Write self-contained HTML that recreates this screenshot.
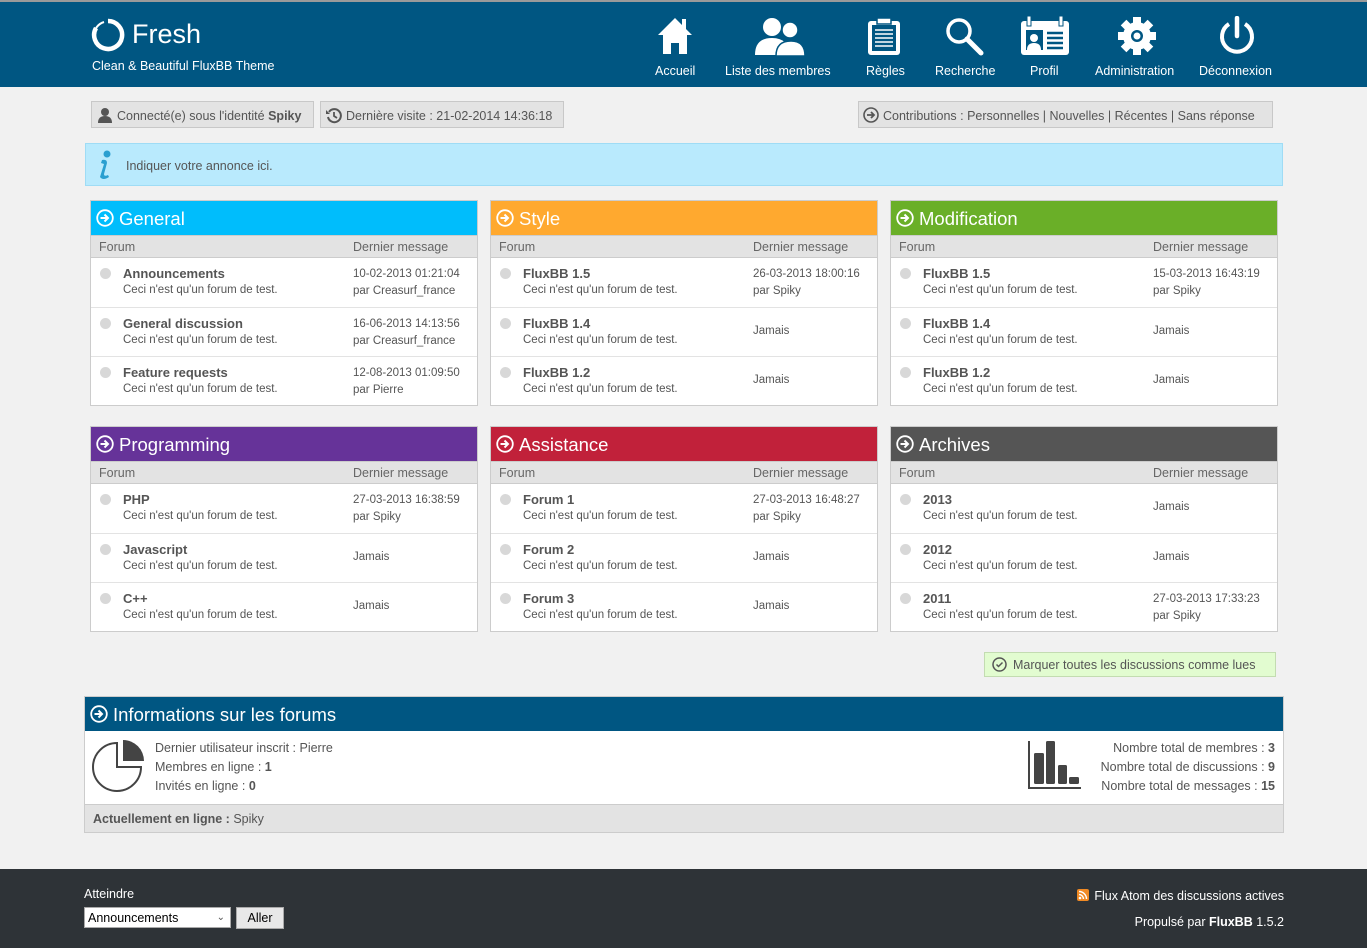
<!DOCTYPE html>
<html><head><meta charset="utf-8"><style>
*{margin:0;padding:0;box-sizing:border-box}
body{width:1367px;height:948px;background:#f1f1f1;font-family:"Liberation Sans","DejaVu Sans",sans-serif;color:#555;font-size:12px;position:relative;overflow:hidden}
.abs{position:absolute}
#hdr{left:0;top:0;width:1367px;height:87px;background:#005682;border-top:2px solid #9a9a9a}
.nav{position:absolute;top:62px;color:#fff;font-size:12.5px;white-space:nowrap}
.ic{position:absolute;top:14px}
.btn{position:absolute;top:101px;height:27px;background:#e3e3e3;border:1px solid #c8c8c8;font-size:12.5px;line-height:29px;padding:0 6px;color:#555;white-space:nowrap}
.panel{position:absolute;width:388px;height:206px;border:1px solid #ccc;background:#fff}
.ph{height:34px;color:#fff;font-size:18.5px;line-height:35px;padding-left:28px;position:relative}
.ph svg{position:absolute;left:5px;top:8px}
.sub{height:23px;background:#e3e3e3;border-top:1px solid #ccc;border-bottom:1px solid #ccc;font-size:12.5px;line-height:22px;color:#666;position:relative;padding-left:8px}
.sub span{position:absolute;left:262px}
.row{height:49.5px;border-bottom:1px solid #e3e3e3;position:relative}
.row:last-child{border-bottom:none}
.dot{position:absolute;left:9px;top:10px;width:11px;height:11px;border-radius:50%;background:#d8d8d8}
.t{position:absolute;left:32px;top:8px;font-weight:bold;font-size:13px;color:#555}
.d{position:absolute;left:32px;top:26px;font-size:11.5px;color:#555}
.m{position:absolute;left:262px;top:8px;font-size:11.5px;line-height:17px;color:#555}
.j{position:absolute;left:262px;top:17px;font-size:11.5px}
</style></head><body>
<div id="hdr" class="abs">
<svg class="abs" style="left:91px;top:16px" width="34" height="34" viewBox="0 0 34 34"><path d="M17 3 A14 14 0 1 1 5 10" fill="none" stroke="#fff" stroke-width="4.5"/><path d="M13 4 A14 14 0 0 0 3 17" fill="none" stroke="#fff" stroke-width="2"/></svg>
<div class="abs" style="left:132px;top:17px;color:#fff;font-size:27px">Fresh</div>
<div class="abs" style="left:92px;top:57px;color:#fff;font-size:12.5px">Clean &amp; Beautiful FluxBB Theme</div>
<svg class="ic" style="left:656px" width="38" height="40" viewBox="0 0 38 40"><path d="M19 2 L2 19 L7 19 L7 38 L15 38 L15 27 L23 27 L23 38 L31 38 L31 19 L36 19 L30 13 L30 3 L26 3 L26 9 Z" fill="#fff"/></svg>
<div class="nav" style="left:655px">Accueil</div>
<svg class="ic" style="left:754px" width="54" height="40" viewBox="0 0 54 40"><circle cx="18" cy="11" r="9" fill="#fff"/><path d="M1 39 Q1 22 18 22 Q35 22 35 39Z" fill="#fff"/><circle cx="36" cy="14" r="8" fill="#fff" stroke="#005682" stroke-width="1.5"/><path d="M22 40 Q22 25 37 25 Q51 25 51 40Z" fill="#fff" stroke="#005682" stroke-width="1.5"/></svg>
<div class="nav" style="left:725px">Liste des membres</div>
<svg class="ic" style="left:866px" width="36" height="40" viewBox="0 0 36 40"><rect x="2" y="5" width="32" height="34" rx="3" fill="#fff"/><rect x="6" y="9" width="24" height="26" fill="#005682"/><rect x="11" y="2" width="14" height="6" fill="#fff" stroke="#005682" stroke-width="1.5"/><g stroke="#fff" stroke-width="1.6"><path d="M9 14h18M9 18h18M9 22h18M9 26h18M9 30h18"/></g></svg>
<div class="nav" style="left:866px">Règles</div>
<svg class="ic" style="left:944px" width="40" height="40" viewBox="0 0 40 40"><circle cx="15" cy="15" r="11" fill="none" stroke="#fff" stroke-width="3.5"/><path d="M23 23 L37 37" stroke="#fff" stroke-width="5" stroke-linecap="round"/></svg>
<div class="nav" style="left:935px">Recherche</div>
<svg class="ic" style="left:1021px" width="48" height="40" viewBox="0 0 48 40"><rect x="0" y="5" width="48" height="34" rx="3" fill="#fff"/><rect x="6" y="0" width="4" height="10" fill="#fff" stroke="#005682"/><rect x="38" y="0" width="4" height="10" fill="#fff" stroke="#005682"/><rect x="5" y="14" width="17" height="20" fill="#005682"/><circle cx="13" cy="22" r="4" fill="#fff"/><path d="M6 34 Q6 27 13 27 Q20 27 20 34Z" fill="#fff"/><g stroke="#005682" stroke-width="2.5"><path d="M26 17h16M26 22h16M26 27h16M26 32h16"/></g></svg>
<div class="nav" style="left:1030px">Profil</div>
<svg class="ic" style="left:1116px" width="42" height="40" viewBox="0 0 42 40"><g transform="translate(21,20)"><g fill="#fff"><circle r="14"/><rect x="-4" y="-19" width="8" height="38"/><rect x="-4" y="-19" width="8" height="38" transform="rotate(45)"/><rect x="-4" y="-19" width="8" height="38" transform="rotate(90)"/><rect x="-4" y="-19" width="8" height="38" transform="rotate(135)"/></g><circle r="6" fill="#005682"/><circle r="3.5" fill="#fff"/></g></svg>
<div class="nav" style="left:1095px">Administration</div>
<svg class="ic" style="left:1217px" width="40" height="40" viewBox="0 0 40 40"><path d="M12 8 A15 15 0 1 0 28 8" fill="none" stroke="#fff" stroke-width="4"/><path d="M20 2 V20" stroke="#fff" stroke-width="4.5" stroke-linecap="round"/></svg>
<div class="nav" style="left:1199px">Déconnexion</div>
</div>

<div class="btn" style="left:91px;width:223px;padding-left:25px"><svg class="abs" style="left:5px;top:5px" width="16" height="16" viewBox="0 0 16 16"><circle cx="8" cy="5" r="4" fill="#555"/><path d="M1 16 Q1 9 8 9 Q15 9 15 16Z" fill="#555"/></svg>Connecté(e) sous l'identité <b>Spiky</b></div>
<div class="btn" style="left:320px;width:244px;padding-left:25px"><svg class="abs" style="left:4px;top:5px" width="17" height="17" viewBox="0 0 17 17"><path d="M4 5 A6.5 6.5 0 1 1 3 10" fill="none" stroke="#555" stroke-width="2"/><path d="M1 3 L5 7 L1 7Z" fill="#555"/><path d="M9 5 V9 L12 11" fill="none" stroke="#555" stroke-width="1.8"/></svg>Dernière visite : 21-02-2014 14:36:18</div>
<div class="btn" style="left:858px;width:415px;padding-left:24px"><svg class="abs" style="left:4px;top:5px" width="16" height="16" viewBox="0 0 16 16"><circle cx="8" cy="8" r="7" fill="none" stroke="#555" stroke-width="1.6"/><path d="M4 8h7M8 5l3 3-3 3" fill="none" stroke="#555" stroke-width="1.8"/></svg>Contributions : Personnelles | Nouvelles | Récentes | Sans réponse</div>

<div class="abs" style="left:85px;top:143px;width:1198px;height:43px;background:#b9eafd;border:1px solid #9fdcf5;font-size:12.5px;line-height:44px;padding-left:40px">
<svg class="abs" style="left:9px;top:6px" width="20" height="30" viewBox="0 0 20 30"><circle cx="12" cy="4" r="3.5" fill="#2a9fd0"/><path d="M7 10 Q12 9 12 13 L9 24 Q9 27 13 25 L14 27 Q8 31 5 27 L9 14 L6 13Z" fill="#2a9fd0"/></svg>
Indiquer votre annonce ici.</div>

<div class="panel" style="left:90px;top:200px"><div class="ph" style="background:#00bdfc"><svg width="18" height="18" viewBox="0 0 18 18"><circle cx="9" cy="9" r="7.8" fill="none" stroke="#fff" stroke-width="1.8"/><path d="M4.5 9h7M8.5 5.5 12 9l-3.5 3.5" fill="none" stroke="#fff" stroke-width="2"/></svg>General</div><div class="sub">Forum<span>Dernier message</span></div>
<div class="row"><div class="dot"></div><div class="t">Announcements</div><div class="d">Ceci n'est qu'un forum de test.</div><div class="m">10-02-2013 01:21:04<br>par Creasurf_france</div></div>
<div class="row"><div class="dot"></div><div class="t">General discussion</div><div class="d">Ceci n'est qu'un forum de test.</div><div class="m">16-06-2013 14:13:56<br>par Creasurf_france</div></div>
<div class="row"><div class="dot"></div><div class="t">Feature requests</div><div class="d">Ceci n'est qu'un forum de test.</div><div class="m">12-08-2013 01:09:50<br>par Pierre</div></div></div>

<div class="panel" style="left:490px;top:200px"><div class="ph" style="background:#ffa92f"><svg width="18" height="18" viewBox="0 0 18 18"><circle cx="9" cy="9" r="7.8" fill="none" stroke="#fff" stroke-width="1.8"/><path d="M4.5 9h7M8.5 5.5 12 9l-3.5 3.5" fill="none" stroke="#fff" stroke-width="2"/></svg>Style</div><div class="sub">Forum<span>Dernier message</span></div>
<div class="row"><div class="dot"></div><div class="t">FluxBB 1.5</div><div class="d">Ceci n'est qu'un forum de test.</div><div class="m">26-03-2013 18:00:16<br>par Spiky</div></div>
<div class="row"><div class="dot"></div><div class="t">FluxBB 1.4</div><div class="d">Ceci n'est qu'un forum de test.</div><div class="j">Jamais</div></div>
<div class="row"><div class="dot"></div><div class="t">FluxBB 1.2</div><div class="d">Ceci n'est qu'un forum de test.</div><div class="j">Jamais</div></div></div>

<div class="panel" style="left:890px;top:200px"><div class="ph" style="background:#6aaf28"><svg width="18" height="18" viewBox="0 0 18 18"><circle cx="9" cy="9" r="7.8" fill="none" stroke="#fff" stroke-width="1.8"/><path d="M4.5 9h7M8.5 5.5 12 9l-3.5 3.5" fill="none" stroke="#fff" stroke-width="2"/></svg>Modification</div><div class="sub">Forum<span>Dernier message</span></div>
<div class="row"><div class="dot"></div><div class="t">FluxBB 1.5</div><div class="d">Ceci n'est qu'un forum de test.</div><div class="m">15-03-2013 16:43:19<br>par Spiky</div></div>
<div class="row"><div class="dot"></div><div class="t">FluxBB 1.4</div><div class="d">Ceci n'est qu'un forum de test.</div><div class="j">Jamais</div></div>
<div class="row"><div class="dot"></div><div class="t">FluxBB 1.2</div><div class="d">Ceci n'est qu'un forum de test.</div><div class="j">Jamais</div></div></div>

<div class="panel" style="left:90px;top:426px"><div class="ph" style="background:#663399"><svg width="18" height="18" viewBox="0 0 18 18"><circle cx="9" cy="9" r="7.8" fill="none" stroke="#fff" stroke-width="1.8"/><path d="M4.5 9h7M8.5 5.5 12 9l-3.5 3.5" fill="none" stroke="#fff" stroke-width="2"/></svg>Programming</div><div class="sub">Forum<span>Dernier message</span></div>
<div class="row"><div class="dot"></div><div class="t">PHP</div><div class="d">Ceci n'est qu'un forum de test.</div><div class="m">27-03-2013 16:38:59<br>par Spiky</div></div>
<div class="row"><div class="dot"></div><div class="t">Javascript</div><div class="d">Ceci n'est qu'un forum de test.</div><div class="j">Jamais</div></div>
<div class="row"><div class="dot"></div><div class="t">C++</div><div class="d">Ceci n'est qu'un forum de test.</div><div class="j">Jamais</div></div></div>

<div class="panel" style="left:490px;top:426px"><div class="ph" style="background:#c1213a"><svg width="18" height="18" viewBox="0 0 18 18"><circle cx="9" cy="9" r="7.8" fill="none" stroke="#fff" stroke-width="1.8"/><path d="M4.5 9h7M8.5 5.5 12 9l-3.5 3.5" fill="none" stroke="#fff" stroke-width="2"/></svg>Assistance</div><div class="sub">Forum<span>Dernier message</span></div>
<div class="row"><div class="dot"></div><div class="t">Forum 1</div><div class="d">Ceci n'est qu'un forum de test.</div><div class="m">27-03-2013 16:48:27<br>par Spiky</div></div>
<div class="row"><div class="dot"></div><div class="t">Forum 2</div><div class="d">Ceci n'est qu'un forum de test.</div><div class="j">Jamais</div></div>
<div class="row"><div class="dot"></div><div class="t">Forum 3</div><div class="d">Ceci n'est qu'un forum de test.</div><div class="j">Jamais</div></div></div>

<div class="panel" style="left:890px;top:426px"><div class="ph" style="background:#555555"><svg width="18" height="18" viewBox="0 0 18 18"><circle cx="9" cy="9" r="7.8" fill="none" stroke="#fff" stroke-width="1.8"/><path d="M4.5 9h7M8.5 5.5 12 9l-3.5 3.5" fill="none" stroke="#fff" stroke-width="2"/></svg>Archives</div><div class="sub">Forum<span>Dernier message</span></div>
<div class="row"><div class="dot"></div><div class="t">2013</div><div class="d">Ceci n'est qu'un forum de test.</div><div class="j">Jamais</div></div>
<div class="row"><div class="dot"></div><div class="t">2012</div><div class="d">Ceci n'est qu'un forum de test.</div><div class="j">Jamais</div></div>
<div class="row"><div class="dot"></div><div class="t">2011</div><div class="d">Ceci n'est qu'un forum de test.</div><div class="m">27-03-2013 17:33:23<br>par Spiky</div></div></div>

<div class="abs" style="left:984px;top:652px;width:292px;height:25px;background:#e2fcd0;border:1px solid #c3dcb1;font-size:12.5px;line-height:25px;padding-left:28px;white-space:nowrap"><svg class="abs" style="left:7px;top:4px" width="15" height="15" viewBox="0 0 15 15"><circle cx="7.5" cy="7.5" r="6.5" fill="none" stroke="#555" stroke-width="1.5"/><path d="M4.5 7.5l2 2 4-4" fill="none" stroke="#555" stroke-width="1.5"/></svg>Marquer toutes les discussions comme lues</div>

<div class="abs" style="left:84px;top:696px;width:1200px;height:137px;border:1px solid #ccc;background:#fff">
<div style="height:34px;background:#005682;color:#fff;font-size:18.5px;line-height:35px;padding-left:28px;position:relative"><svg class="abs" style="left:5px;top:8px" width="18" height="18" viewBox="0 0 18 18"><circle cx="9" cy="9" r="7.8" fill="none" stroke="#fff" stroke-width="1.8"/><path d="M4.5 9h7M8.5 5.5 12 9l-3.5 3.5" fill="none" stroke="#fff" stroke-width="2"/></svg>Informations sur les forums</div>
<svg class="abs" style="left:5px;top:41px" width="56" height="56" viewBox="0 0 56 56"><path d="M27 5 A24 24 0 1 0 51 29 L27 29Z" fill="none" stroke="#444" stroke-width="2"/><path d="M33 2 A21 21 0 0 1 54 23 L33 23Z" fill="#444"/></svg>
<div class="abs" style="left:70px;top:42px;font-size:12.5px;line-height:19px">Dernier utilisateur inscrit : Pierre<br>Membres en ligne : <b>1</b><br>Invités en ligne : <b>0</b></div>
<svg class="abs" style="left:943px;top:44px" width="54" height="48" viewBox="0 0 54 48"><path d="M1 0V47H53" fill="none" stroke="#444" stroke-width="2"/><rect x="6" y="12" width="10" height="31" rx="1.5" fill="#444"/><rect x="18" y="0" width="9" height="43" rx="1.5" fill="#444"/><rect x="30" y="24" width="9" height="19" rx="1.5" fill="#444"/><rect x="41" y="36" width="10" height="7" rx="1.5" fill="#444"/></svg>
<div class="abs" style="right:8px;top:42px;font-size:12.5px;line-height:19px;text-align:right">Nombre total de membres : <b>3</b><br>Nombre total de discussions : <b>9</b><br>Nombre total de messages : <b>15</b></div>
<div class="abs" style="left:0;top:107px;width:1198px;height:28px;background:#e3e3e3;border-top:1px solid #ccc;font-size:12.5px;line-height:29px;padding-left:8px"><b>Actuellement en ligne :</b> Spiky</div>
</div>

<div class="abs" style="left:0;top:869px;width:1367px;height:79px;background:#2e3337;color:#fff;font-size:12.5px">
<div class="abs" style="left:84px;top:18px">Atteindre</div>
<div class="abs" style="left:84px;top:38px;width:147px;height:21px;background:#fff;border:1px solid #aaa;color:#000;padding-left:3px;line-height:20px">Announcements<span class="abs" style="right:5px;top:0;font-size:10px;color:#555">&#8964;</span></div>
<div class="abs" style="left:236px;top:38px;width:48px;height:22px;background:#e8e8e8;border:1px solid #aaa;color:#000;text-align:center;line-height:21px">Aller</div>
<div class="abs" style="right:83px;top:20px"><svg width="12" height="12" viewBox="0 0 12 12" style="vertical-align:-1px;margin-right:5px"><rect width="12" height="12" rx="2" fill="#f08a24"/><circle cx="3" cy="9" r="1.3" fill="#fff"/><path d="M2 5.5A4.5 4.5 0 0 1 6.5 10M2 2.5A7.5 7.5 0 0 1 9.5 10" fill="none" stroke="#fff" stroke-width="1.4"/></svg>Flux Atom des discussions actives</div>
<div class="abs" style="right:83px;top:46px">Propulsé par <b>FluxBB</b> 1.5.2</div>
</div>
</body></html>
